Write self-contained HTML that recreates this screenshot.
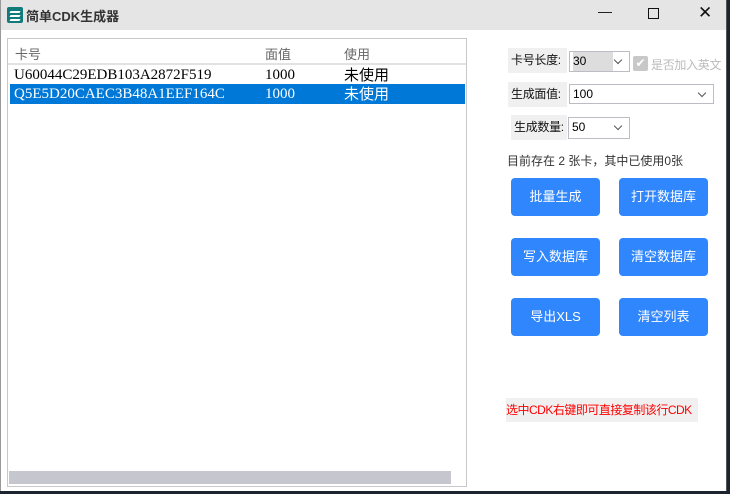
<!DOCTYPE html>
<html><head><meta charset="utf-8"><style>
*{margin:0;padding:0;box-sizing:border-box}
body{width:730px;height:494px;background:#1c2430;position:relative;overflow:hidden;font-family:"Liberation Sans","Noto Sans CJK SC",sans-serif;font-size:13px}
.win{position:absolute;left:0;top:0;width:727px;height:491px;background:#fff;border-left:1px solid #999;border-right:1px solid #555}
.title{position:absolute;left:0;top:0;width:100%;height:30px;background:#e5e5e5}
.title .t{position:absolute;left:25px;top:6px;font-size:13px;font-weight:bold;color:#333}
.ic{position:absolute;left:6px;top:7px;width:16px;height:16px;background:#127a7a;border-radius:2px}
.ic i{position:absolute;left:3px;width:10px;height:2px;background:#fff;transform:skewX(-30deg)}
.wb{position:absolute;top:6px;font-size:14px;color:#111}
.list{position:absolute;left:6px;top:38px;width:460px;height:449px;border:1px solid #c8c8cc;background:#fff}
.hd{position:absolute;top:5px;color:#666;font-size:13px}
.sep{position:absolute;left:0;top:24px;width:100%;height:2px;background:#e2e2e2}
.row{position:absolute;left:2px;width:455px;height:20px;font-family:"Liberation Serif","Noto Serif CJK SC",serif;font-size:15px;line-height:20px}
.row span{position:absolute;top:0}
.sb{position:absolute;left:1px;top:432px;width:442px;height:13px;background:#c6c6ce}
.lbl{position:absolute;background:#f0f0f0;font-size:12px;color:#111;line-height:25px;padding-left:3px;white-space:nowrap;overflow:hidden;letter-spacing:-0.3px}
.cb{position:absolute;border:1px solid #bcbcc4;background:#fff;font-size:12px;line-height:19px;padding-left:3px}
.cb:after{content:"";position:absolute;right:8px;top:5px;width:5px;height:5px;border-right:1.5px solid #555;border-bottom:1.5px solid #555;transform:rotate(45deg)}
.btn{position:absolute;width:89px;height:38px;background:#2f86fd;border-radius:4px;color:#fff;text-align:center;line-height:38px;font-size:13px}
</style></head><body>
<div class="win">
<div class="title"><div class="ic"><i style="top:4px"></i><i style="top:8px"></i><i style="top:12px"></i></div><div class="t">简单CDK生成器</div>
<div class="wb" style="left:597px;top:3px">—</div>
<div class="wb" style="left:647px;top:8px;width:11px;height:11px;border:1.3px solid #111"></div>
<div class="wb" style="left:697px;top:3px;font-size:17px">✕</div></div>
<div class="list">
<div class="hd" style="left:7px">卡号</div><div class="hd" style="left:257px">面值</div><div class="hd" style="left:336px">使用</div>
<div class="sep"></div>
<div class="row" style="top:26px"><span style="left:4px">U60044C29EDB103A2872F519</span><span style="left:255px">1000</span><span style="left:334px;font-family:'Noto Sans CJK SC',sans-serif;font-size:15px">未使用</span></div>
<div class="row" style="top:45px;background:#0078d7;color:#fff"><span style="left:4px">Q5E5D20CAEC3B48A1EEF164C</span><span style="left:255px">1000</span><span style="left:334px;font-family:'Noto Sans CJK SC',sans-serif;font-size:15px">未使用</span></div>
<div class="sb"></div>
</div>
<div class="lbl" style="left:507px;top:48px;width:59px">卡号长度:</div>
<div class="cb" style="left:568px;top:51px;width:61px;height:21px"><span style="background:#ddd;display:inline-block;width:40px">30</span></div>
<div style="position:absolute;left:632px;top:56px;width:15px;height:15px;background:#c8c8c8;border-radius:2px;color:#fff;font-size:12px;line-height:15px;text-align:center">✔</div>
<div style="position:absolute;left:650px;top:56px;color:#bbb;font-size:12px;white-space:nowrap;letter-spacing:-0.3px">是否加入英文</div>
<div class="lbl" style="left:507px;top:82px;width:59px">生成面值:</div>
<div class="cb" style="left:568px;top:84px;width:145px;height:20px">100</div>
<div class="lbl" style="left:510px;top:115px;width:56px">生成数量:</div>
<div class="cb" style="left:567px;top:117px;width:62px;height:22px">50</div>
<div style="position:absolute;left:506px;top:152px;color:#333;font-size:12px;white-space:nowrap">目前存在 2 张卡，其中已使用0张</div>
<div class="btn" style="left:510px;top:178px">批量生成</div>
<div class="btn" style="left:618px;top:178px">打开数据库</div>
<div class="btn" style="left:510px;top:238px">写入数据库</div>
<div class="btn" style="left:618px;top:238px">清空数据库</div>
<div class="btn" style="left:510px;top:298px">导出XLS</div>
<div class="btn" style="left:618px;top:298px">清空列表</div>
<div style="position:absolute;left:505px;top:398px;width:192px;height:24px;background:#f0f0f0;color:#f00;font-size:12px;line-height:24px;white-space:nowrap;letter-spacing:-0.5px">选中CDK右键即可直接复制该行CDK</div>
</div>
</body></html>
